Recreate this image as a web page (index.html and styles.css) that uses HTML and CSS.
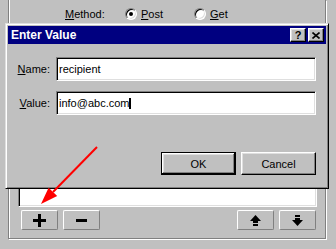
FILE: index.html
```html
<!DOCTYPE html>
<html>
<head>
<meta charset="utf-8">
<link rel="stylesheet" href="styles.css">
</head>
<body>
<div class="frame">
  <div class="method-row">
    <span class="method-label"><u>M</u>ethod:</span>
    <span class="opt"><span class="radio checked"></span><span><u>P</u>ost</span></span>
    <span class="opt"><span class="radio"></span><span><u>G</u>et</span></span>
  </div>
  <div class="list"></div>
  <div class="btn-row">
    <div class="grp">
      <button class="tb"><svg width="13" height="13" viewBox="0 0 13 13"><rect x="0" y="5" width="13" height="3" fill="#000"/><rect x="5" y="0" width="3" height="13" fill="#000"/></svg></button>
      <button class="tb"><svg width="11" height="3" viewBox="0 0 11 3"><rect x="0" y="0" width="11" height="3" fill="#000"/></svg></button>
    </div>
    <div class="grp">
      <button class="tb"><svg width="11" height="11" viewBox="0 0 11 11"><polygon points="5.5,0 11,6 0,6" fill="#000"/><rect x="3" y="6" width="5" height="2" fill="#000"/><rect x="3" y="9" width="5" height="2" fill="#000"/></svg></button>
      <button class="tb"><svg width="11" height="11" viewBox="0 0 11 11"><rect x="3" y="0" width="5" height="2" fill="#000"/><rect x="3" y="3" width="5" height="2" fill="#000"/><polygon points="0,5 11,5 5.5,11" fill="#000"/></svg></button>
    </div>
  </div>
</div>

<div class="dialog">
  <div class="titlebar">
    <span class="title">Enter Value</span>
    <span class="tbtns">
      <span class="cbtn help">?</span>
      <span class="cbtn"><svg width="8" height="7" viewBox="0 0 8 7"><path d="M0.5 0.5 L7.5 6.5 M7.5 0.5 L0.5 6.5" stroke="#000" stroke-width="1.6" fill="none"/></svg></span>
    </span>
  </div>
  <div class="form">
    <label class="flabel"><u>N</u>ame:</label>
    <div class="field">recipient</div>
    <label class="flabel"><u>V</u>alue:</label>
    <div class="field">info@abc.com<span class="caret"></span></div>
  </div>
  <div class="actions">
    <button class="pbtn default">OK</button>
    <button class="pbtn">Cancel</button>
  </div>
</div>

<svg class="arrow" width="336" height="249" viewBox="0 0 336 249">
  <line x1="97" y1="147" x2="53" y2="192" stroke="#ff0000" stroke-width="2"/>
  <polygon points="41,204 57.2,196.1 48.6,187.7" fill="#ff0000"/>
</svg>
</body>
</html>
```
FILE: styles.css
```css
* { box-sizing: border-box; }
html, body { margin: 0; padding: 0; }
body {
  width: 336px;
  height: 249px;
  background: #c0c0c0;
  font: 11px "Liberation Sans", Arial, sans-serif;
  color: #000;
  position: relative;
  overflow: hidden;
}
u { text-decoration: underline; text-underline-offset: 1px; }

.frame {
  margin-left: 8px;
  width: 318px;
  height: 239px;
  border: 1px solid #808080;
  border-top: 0;
  box-shadow: inset 1px 0 0 #fff, 1px 1px 0 #fff;
  display: flex;
  flex-direction: column;
}
.method-row {
  display: flex;
  align-items: center;
  height: 14px;
  margin-top: 7px;
  padding-left: 56px;
  line-height: 14px;
}
.method-label { width: 60px; }
.opt { display: flex; align-items: center; gap: 4px; width: 69px; }
.radio {
  width: 12px;
  height: 12px;
  border-radius: 50%;
  border: 1px solid;
  border-color: #808080 #fff #fff #808080;
  box-shadow: inset 1px 1px 0 #000, inset -1px -1px 0 #dfdfdf;
  background: #fff;
  position: relative;
}
.radio.checked::after {
  content: "";
  position: absolute;
  left: 3px;
  top: 3px;
  width: 4px;
  height: 4px;
  border-radius: 50%;
  background: #000;
}
.list {
  margin: 19px 0 0 9px;
  width: 299px;
  height: 167px;
  background: #fff;
  border: 1px solid;
  border-color: #808080 #fff #fff #808080;
  box-shadow: inset 1px 1px 0 #000, inset -1px -1px 0 #dfdfdf;
}
.btn-row {
  display: flex;
  justify-content: space-between;
  margin-top: 3px;
  padding: 0 9px 0 12px;
}
.grp { display: flex; gap: 5px; }
.tb {
  width: 37px;
  height: 20px;
  padding: 0;
  margin: 0;
  border: 1px solid;
  border-color: #fff #808080 #808080 #fff;
  border-radius: 2px;
  background: #c0c0c0;
  display: flex;
  align-items: center;
  justify-content: center;
}
.tb svg { display: block; }

.dialog {
  position: absolute;
  left: 5px;
  top: 23px;
  width: 324px;
  height: 166px;
  background: #c0c0c0;
  border: 1px solid;
  border-color: #dfdfdf #000 #000 #dfdfdf;
  box-shadow: inset 1px 1px 0 #fff, inset -1px -1px 0 #808080;
  padding: 2px;
}
.titlebar {
  height: 18px;
  background: #000080;
  color: #fff;
  font-weight: bold;
  font-size: 12px;
  display: flex;
  align-items: center;
  padding: 0 2px 0 3px;
}
.title { flex: 1; line-height: 18px; }
.tbtns { display: flex; gap: 2px; }
.cbtn {
  width: 16px;
  height: 14px;
  background: #c0c0c0;
  border: 1px solid;
  border-color: #fff #000 #000 #fff;
  box-shadow: inset -1px -1px 0 #808080, inset 1px 1px 0 #dfdfdf;
  display: flex;
  align-items: center;
  justify-content: center;
  color: #000;
  font-size: 11px;
  font-weight: bold;
  line-height: 12px;
}
.cbtn svg { display: block; }

.form {
  display: grid;
  grid-template-columns: 42px 260px;
  column-gap: 6px;
  row-gap: 10px;
  margin-top: 13px;
  align-items: center;
  padding-left: 1px;
  margin-left: -1px;
}
.flabel { text-align: right; }
.field {
  height: 24px;
  background: #fff;
  border: 1px solid;
  border-color: #808080 #fff #fff #808080;
  box-shadow: inset 1px 1px 0 #000, inset -1px -1px 0 #dfdfdf;
  padding-left: 2px;
  display: flex;
  align-items: center;
}
.caret {
  display: inline-block;
  width: 2px;
  height: 11px;
  background: #000;
}
.actions {
  display: flex;
  justify-content: flex-end;
  gap: 5px;
  margin-top: 37px;
  padding-right: 10px;
}
.pbtn {
  width: 75px;
  height: 23px;
  margin: 0;
  padding: 0;
  font: 11px "Liberation Sans", Arial, sans-serif;
  color: #000;
  background: #c0c0c0;
  border: 1px solid;
  border-color: #fff #000 #000 #fff;
  box-shadow: inset -1px -1px 0 #808080, inset 1px 1px 0 #dfdfdf;
}
.pbtn.default {
  border-color: #000;
  box-shadow: inset -1px -1px 0 #000, inset 1px 1px 0 #fff, inset -2px -2px 0 #808080, inset 2px 2px 0 #dfdfdf;
}
.arrow {
  position: absolute;
  left: 0;
  top: 0;
  pointer-events: none;
}
```
